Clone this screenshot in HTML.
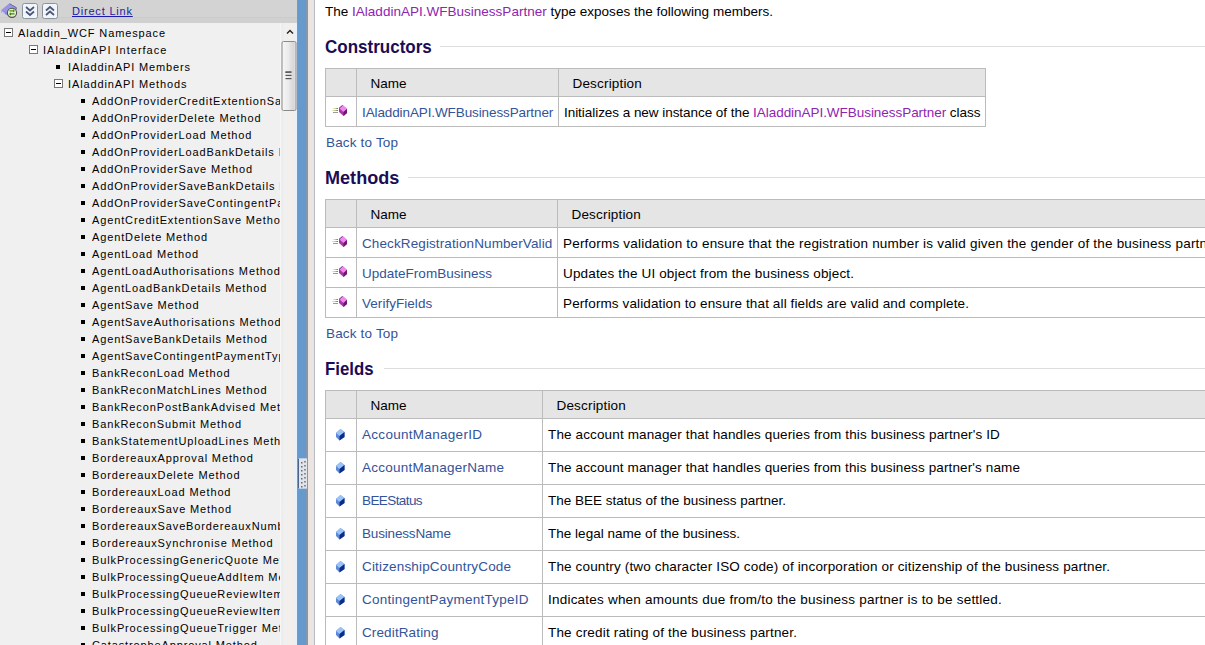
<!DOCTYPE html>
<html><head><meta charset="utf-8">
<style>
*{margin:0;padding:0;box-sizing:border-box}
html,body{width:1205px;height:645px;overflow:hidden;background:#fff}
body{position:relative;font-family:"Liberation Sans",sans-serif}
#left{position:absolute;left:0;top:0;width:297px;height:645px;background:#f0f0f0;overflow:hidden}
#tb{position:absolute;left:0;top:0;width:297px;height:23px;background:#d3d3d3}
#tbl{position:absolute;left:0;top:17px;width:297px;height:6px;background:#d0d0d0;border-top:1px solid #cbcbcb}
#dl{position:absolute;left:72px;top:5px;font-size:11px;letter-spacing:0.8px;color:#1c1ca8;text-decoration:underline;white-space:nowrap}
#tree{position:absolute;left:0;top:23px;width:280px;height:622px;overflow:hidden;font-size:11px;letter-spacing:0.75px;color:#000}
.r{position:absolute;height:17px;white-space:nowrap;line-height:17px}
.pm{position:absolute;width:9px;height:9px;border:1px solid #787878;background:#fff}
.pm:after{content:"";position:absolute;left:1px;top:3px;width:5px;height:1px;background:#000}
.bl{position:absolute;width:4px;height:4px;background:#000}
#sb{position:absolute;left:280px;top:23px;width:17px;height:622px;background:linear-gradient(90deg,#fafafa,#ececec 10%,#f1f1f1 30%,#f3efec 60%,#f2eee9 80%,#e6f1fc 88%,#e6f1fc)}
#split{position:absolute;left:297px;top:0;width:11px;height:645px;background:#6699cc;border-left:1px solid #6f9bcc;border-right:2px solid #8796ab}
#grip{position:absolute;left:0;top:458px;width:9px;height:31px;background:#dfe3ea;border-left:1px solid #50648a;border-top:1px solid #b8cce6;border-bottom:1px solid #b8cce6}
#gap{position:absolute;left:308px;top:0;width:6px;height:645px;background:#ebe4e0}
#gline{position:absolute;left:314px;top:0;width:1px;height:645px;background:#b5bcc2}
#content{position:absolute;left:315px;top:0;width:890px;height:645px;background:#fff;overflow:hidden;font-size:13px;color:#000}
.t{position:absolute;white-space:nowrap;line-height:15px;font-size:13.5px;letter-spacing:0.23px}
.h2{position:absolute;font-size:19px;line-height:21px;font-weight:bold;color:#1c0c56;white-space:nowrap}
.hr{position:absolute;height:1px;background:#dddddd}
.thd{position:absolute;background:#e5e5e5}
.bd{position:absolute;background:#bbbbbb}
.blue{color:#33539a}
.purp{color:#8e24b0}
</style></head><body>
<div id="left">
  <div id="tb">
    <div id="tbl"></div>
    <svg width="60" height="23" viewBox="0 0 60 23" style="position:absolute;left:0;top:0">
      <polygon points="1.5,10 9.5,3.5 16.5,7.5 16.5,9.5 9,16 1.5,12.5" fill="#8a88d6"/>
      <polygon points="1.5,10 9.5,3.5 16.5,7.5 9,13.5" fill="#9896e0"/>
      <polyline points="9.5,3.8 16.2,7.6 16.2,9.5" fill="none" stroke="#6a6ca6" stroke-width="1"/>
      <polygon points="2,11 5,13 4.5,14.5 2,12.8" fill="#c8c8f6"/>
      <circle cx="12" cy="12.8" r="4.6" fill="#e4f2c4" stroke="#505050" stroke-width="1.1"/>
      <polygon points="9.5,10.2 13,10.2 13,9 15,10.9 13,12.6 13,11.5 9.5,11.5" fill="#4a9418"/>
      <polygon points="14.5,13.2 11,13.2 11,12.2 9,14 11,15.8 11,14.5 14.5,14.5" fill="#3c8412"/>
      <rect x="22.5" y="3.5" width="15" height="15" rx="2" fill="#f1f6fb" stroke="#8a929a" stroke-width="1"/>
      <polyline points="26,7 30,10.5 34,7" fill="none" stroke="#4d5478" stroke-width="1.7"/>
      <polyline points="26,11.5 30,15 34,11.5" fill="none" stroke="#4d5478" stroke-width="1.7"/>
      <rect x="42.5" y="3.5" width="15" height="15" rx="2" fill="#f1f6fb" stroke="#8a929a" stroke-width="1"/>
      <polyline points="46,10.5 50,7 54,10.5" fill="none" stroke="#4d5478" stroke-width="1.7"/>
      <polyline points="46,15 50,11.5 54,15" fill="none" stroke="#4d5478" stroke-width="1.7"/>
    </svg>
    <div id="dl">Direct Link</div>
  </div>
  <div id="tree"><div class="pm" style="left:4px;top:5px"></div>
<div class="r" style="left:18px;top:2px;letter-spacing:0.87px">Aladdin_WCF Namespace</div>
<div class="pm" style="left:29px;top:22px"></div>
<div class="r" style="left:43px;top:19px;letter-spacing:1.0px">IAladdinAPI Interface</div>
<div class="bl" style="left:56px;top:42px"></div>
<div class="r" style="left:68px;top:36px;letter-spacing:0.87px">IAladdinAPI Members</div>
<div class="pm" style="left:54px;top:56px"></div>
<div class="r" style="left:68px;top:53px;letter-spacing:0.87px">IAladdinAPI Methods</div>
<div class="bl" style="left:81px;top:76px"></div>
<div class="r" style="left:92px;top:70px;letter-spacing:0.87px">AddOnProviderCreditExtentionSave Method</div>
<div class="bl" style="left:81px;top:93px"></div>
<div class="r" style="left:92px;top:87px;letter-spacing:0.87px">AddOnProviderDelete Method</div>
<div class="bl" style="left:81px;top:110px"></div>
<div class="r" style="left:92px;top:104px;letter-spacing:0.87px">AddOnProviderLoad Method</div>
<div class="bl" style="left:81px;top:127px"></div>
<div class="r" style="left:92px;top:121px;letter-spacing:0.87px">AddOnProviderLoadBankDetails Method</div>
<div class="bl" style="left:81px;top:144px"></div>
<div class="r" style="left:92px;top:138px;letter-spacing:0.87px">AddOnProviderSave Method</div>
<div class="bl" style="left:81px;top:161px"></div>
<div class="r" style="left:92px;top:155px;letter-spacing:0.87px">AddOnProviderSaveBankDetails Method</div>
<div class="bl" style="left:81px;top:178px"></div>
<div class="r" style="left:92px;top:172px;letter-spacing:0.87px">AddOnProviderSaveContingentPaymentType Method</div>
<div class="bl" style="left:81px;top:195px"></div>
<div class="r" style="left:92px;top:189px;letter-spacing:0.87px">AgentCreditExtentionSave Method</div>
<div class="bl" style="left:81px;top:212px"></div>
<div class="r" style="left:92px;top:206px;letter-spacing:0.87px">AgentDelete Method</div>
<div class="bl" style="left:81px;top:229px"></div>
<div class="r" style="left:92px;top:223px;letter-spacing:0.87px">AgentLoad Method</div>
<div class="bl" style="left:81px;top:246px"></div>
<div class="r" style="left:92px;top:240px;letter-spacing:0.87px">AgentLoadAuthorisations Method</div>
<div class="bl" style="left:81px;top:263px"></div>
<div class="r" style="left:92px;top:257px;letter-spacing:0.87px">AgentLoadBankDetails Method</div>
<div class="bl" style="left:81px;top:280px"></div>
<div class="r" style="left:92px;top:274px;letter-spacing:0.87px">AgentSave Method</div>
<div class="bl" style="left:81px;top:297px"></div>
<div class="r" style="left:92px;top:291px;letter-spacing:0.87px">AgentSaveAuthorisations Method</div>
<div class="bl" style="left:81px;top:314px"></div>
<div class="r" style="left:92px;top:308px;letter-spacing:0.87px">AgentSaveBankDetails Method</div>
<div class="bl" style="left:81px;top:331px"></div>
<div class="r" style="left:92px;top:325px;letter-spacing:0.87px">AgentSaveContingentPaymentType Method</div>
<div class="bl" style="left:81px;top:348px"></div>
<div class="r" style="left:92px;top:342px;letter-spacing:0.87px">BankReconLoad Method</div>
<div class="bl" style="left:81px;top:365px"></div>
<div class="r" style="left:92px;top:359px;letter-spacing:0.87px">BankReconMatchLines Method</div>
<div class="bl" style="left:81px;top:382px"></div>
<div class="r" style="left:92px;top:376px;letter-spacing:0.87px">BankReconPostBankAdvised Method</div>
<div class="bl" style="left:81px;top:399px"></div>
<div class="r" style="left:92px;top:393px;letter-spacing:0.87px">BankReconSubmit Method</div>
<div class="bl" style="left:81px;top:416px"></div>
<div class="r" style="left:92px;top:410px;letter-spacing:0.87px">BankStatementUploadLines Method</div>
<div class="bl" style="left:81px;top:433px"></div>
<div class="r" style="left:92px;top:427px;letter-spacing:0.87px">BordereauxApproval Method</div>
<div class="bl" style="left:81px;top:450px"></div>
<div class="r" style="left:92px;top:444px;letter-spacing:0.87px">BordereauxDelete Method</div>
<div class="bl" style="left:81px;top:467px"></div>
<div class="r" style="left:92px;top:461px;letter-spacing:0.87px">BordereauxLoad Method</div>
<div class="bl" style="left:81px;top:484px"></div>
<div class="r" style="left:92px;top:478px;letter-spacing:0.87px">BordereauxSave Method</div>
<div class="bl" style="left:81px;top:501px"></div>
<div class="r" style="left:92px;top:495px;letter-spacing:0.87px">BordereauxSaveBordereauxNumber Method</div>
<div class="bl" style="left:81px;top:518px"></div>
<div class="r" style="left:92px;top:512px;letter-spacing:0.87px">BordereauxSynchronise Method</div>
<div class="bl" style="left:81px;top:535px"></div>
<div class="r" style="left:92px;top:529px;letter-spacing:0.87px">BulkProcessingGenericQuote Method</div>
<div class="bl" style="left:81px;top:552px"></div>
<div class="r" style="left:92px;top:546px;letter-spacing:0.87px">BulkProcessingQueueAddItem Method</div>
<div class="bl" style="left:81px;top:569px"></div>
<div class="r" style="left:92px;top:563px;letter-spacing:0.87px">BulkProcessingQueueReviewItem Method</div>
<div class="bl" style="left:81px;top:586px"></div>
<div class="r" style="left:92px;top:580px;letter-spacing:0.87px">BulkProcessingQueueReviewItems Method</div>
<div class="bl" style="left:81px;top:603px"></div>
<div class="r" style="left:92px;top:597px;letter-spacing:0.87px">BulkProcessingQueueTrigger Method</div>
<div class="bl" style="left:81px;top:620px"></div>
<div class="r" style="left:92px;top:614px;letter-spacing:0.87px">CatastropheApproval Method</div></div>
  <div id="sb">
    <svg width="17" height="622" viewBox="0 0 16 622" style="position:absolute;left:1px;top:0">
      <polyline points="5.5,10.5 8.5,7.5 11.5,10.5" fill="none" stroke="#222" stroke-width="1.4"/>
      <rect x="0.5" y="18.5" width="14" height="69" rx="1.5" fill="url(#tg)" stroke="#8a8a8a" stroke-width="1"/>
      <defs><linearGradient id="tg" x1="0" x2="1" y1="0" y2="0"><stop offset="0" stop-color="#f6f6f6"/><stop offset="0.45" stop-color="#ebebeb"/><stop offset="0.8" stop-color="#d9d6d8"/><stop offset="1" stop-color="#e4e4e8"/></linearGradient></defs>
      <polygon points="4,48.5 10,48.5 10,49.5 4,50" fill="#555"/>
      <rect x="4" y="48.5" width="6" height="1.2" fill="#555"/>
      <rect x="4" y="51.8" width="6" height="1.2" fill="#555"/>
      <rect x="4" y="55" width="6" height="1.2" fill="#555"/>
    </svg>
  </div>
</div>
<div id="split"><div id="grip"><svg width="9" height="31" style="position:absolute;left:0;top:0"><rect x="2" y="3" width="1.5" height="1.5" fill="#6a6a78"/><rect x="5.2" y="2" width="1.5" height="1.5" fill="#6a6a78"/><rect x="2" y="7" width="1.5" height="1.5" fill="#6a6a78"/><rect x="5.2" y="6" width="1.5" height="1.5" fill="#6a6a78"/><rect x="2" y="11" width="1.5" height="1.5" fill="#6a6a78"/><rect x="5.2" y="10" width="1.5" height="1.5" fill="#6a6a78"/><rect x="2" y="15" width="1.5" height="1.5" fill="#6a6a78"/><rect x="5.2" y="14" width="1.5" height="1.5" fill="#6a6a78"/><rect x="2" y="19" width="1.5" height="1.5" fill="#6a6a78"/><rect x="5.2" y="18" width="1.5" height="1.5" fill="#6a6a78"/><rect x="2" y="23" width="1.5" height="1.5" fill="#6a6a78"/><rect x="5.2" y="22" width="1.5" height="1.5" fill="#6a6a78"/><rect x="2" y="27" width="1.5" height="1.5" fill="#6a6a78"/><rect x="5.2" y="26" width="1.5" height="1.5" fill="#6a6a78"/></svg></div></div>
<div id="gap"></div>
<div id="gline"></div>
<div id="content"><div class="t" style="left:10px;top:4px;letter-spacing:0.011px">The <span class="purp">IAladdinAPI.WFBusinessPartner</span> type exposes the following members.</div>
<div class="h2" style="left:10px;top:36px;transform:scaleX(0.8952);transform-origin:0 0">Constructors</div>
<div class="hr" style="left:125px;top:46px;width:765px"></div>
<div class="h2" style="left:10px;top:167px;transform:scaleX(0.9513);transform-origin:0 0">Methods</div>
<div class="hr" style="left:93px;top:177px;width:797px"></div>
<div class="h2" style="left:10px;top:358px;transform:scaleX(0.8827);transform-origin:0 0">Fields</div>
<div class="hr" style="left:69px;top:368px;width:821px"></div>
<div class="thd" style="left:10px;top:68px;width:660px;height:28px"></div>
<div class="bd" style="left:10px;top:68px;width:661px;height:1px"></div>
<div class="bd" style="left:10px;top:96px;width:661px;height:1px"></div>
<div class="bd" style="left:10px;top:126px;width:661px;height:1px"></div>
<div class="bd" style="left:10px;top:68px;width:1px;height:59px"></div>
<div class="bd" style="left:41px;top:68px;width:1px;height:59px"></div>
<div class="bd" style="left:243px;top:68px;width:1px;height:59px"></div>
<div class="bd" style="left:670px;top:68px;width:1px;height:59px"></div>
<div class="t" style="left:55.5px;top:76px;letter-spacing:0.028px">Name</div>
<div class="t" style="left:257.5px;top:76px;letter-spacing:0.177px">Description</div>
<div class="t blue" style="left:47px;top:105px;letter-spacing:-0.109px">IAladdinAPI.WFBusinessPartner</div>
<div class="t" style="left:249px;top:105px;letter-spacing:-0.045px">Initializes a new instance of the <span class="purp">IAladdinAPI.WFBusinessPartner</span> class</div>
<svg width="16" height="12" viewBox="0 0 16 12" style="position:absolute;left:17px;top:105px">
<defs><linearGradient id="lg17105" x1="0" x2="1"><stop offset="0" stop-color="#f0f0c8"/><stop offset="0.5" stop-color="#c8c898"/><stop offset="1" stop-color="#707070"/></linearGradient></defs>
<rect x="1" y="3" width="5" height="1" fill="url(#lg17105)"/><rect x="0" y="5" width="6" height="1" fill="url(#lg17105)"/><rect x="1" y="7" width="5" height="1" fill="#9a9a9a"/>
<polygon points="10.5,0 15,4 15,8 11.5,11 7,7 7,3" fill="#a838a8"/>
<polygon points="10.5,0 15,4 11.5,7 7,3" fill="#f088f0"/>
<polygon points="15,4 15,8 11.5,11 11.5,7" fill="#6a1870"/>
<polyline points="7,3.5 10.5,0.5" stroke="#603070" stroke-width="0.8" fill="none"/>
</svg>
<div class="t blue" style="left:11px;top:135px;letter-spacing:0.170px">Back to Top</div>
<div class="thd" style="left:10px;top:199px;width:975px;height:28px"></div>
<div class="bd" style="left:10px;top:199px;width:976px;height:1px"></div>
<div class="bd" style="left:10px;top:227px;width:976px;height:1px"></div>
<div class="bd" style="left:10px;top:257px;width:976px;height:1px"></div>
<div class="bd" style="left:10px;top:287px;width:976px;height:1px"></div>
<div class="bd" style="left:10px;top:317px;width:976px;height:1px"></div>
<div class="bd" style="left:10px;top:199px;width:1px;height:119px"></div>
<div class="bd" style="left:41px;top:199px;width:1px;height:119px"></div>
<div class="bd" style="left:242px;top:199px;width:1px;height:119px"></div>
<div class="t" style="left:55.5px;top:207px;letter-spacing:0.028px">Name</div>
<div class="t" style="left:256.5px;top:207px;letter-spacing:0.177px">Description</div>
<div class="t blue" style="left:47px;top:236px;letter-spacing:0.109px">CheckRegistrationNumberValid</div>
<div class="t" style="left:248px;top:236px;letter-spacing:0.202px">Performs validation to ensure that the registration number is valid given the gender of the business partner.</div>
<svg width="16" height="12" viewBox="0 0 16 12" style="position:absolute;left:17px;top:236px">
<defs><linearGradient id="lg17236" x1="0" x2="1"><stop offset="0" stop-color="#f0f0c8"/><stop offset="0.5" stop-color="#c8c898"/><stop offset="1" stop-color="#707070"/></linearGradient></defs>
<rect x="1" y="3" width="5" height="1" fill="url(#lg17236)"/><rect x="0" y="5" width="6" height="1" fill="url(#lg17236)"/><rect x="1" y="7" width="5" height="1" fill="#9a9a9a"/>
<polygon points="10.5,0 15,4 15,8 11.5,11 7,7 7,3" fill="#a838a8"/>
<polygon points="10.5,0 15,4 11.5,7 7,3" fill="#f088f0"/>
<polygon points="15,4 15,8 11.5,11 11.5,7" fill="#6a1870"/>
<polyline points="7,3.5 10.5,0.5" stroke="#603070" stroke-width="0.8" fill="none"/>
</svg>
<div class="t blue" style="left:47px;top:266px;letter-spacing:0.011px">UpdateFromBusiness</div>
<div class="t" style="left:248px;top:266px;letter-spacing:0.160px">Updates the UI object from the business object.</div>
<svg width="16" height="12" viewBox="0 0 16 12" style="position:absolute;left:17px;top:266px">
<defs><linearGradient id="lg17266" x1="0" x2="1"><stop offset="0" stop-color="#f0f0c8"/><stop offset="0.5" stop-color="#c8c898"/><stop offset="1" stop-color="#707070"/></linearGradient></defs>
<rect x="1" y="3" width="5" height="1" fill="url(#lg17266)"/><rect x="0" y="5" width="6" height="1" fill="url(#lg17266)"/><rect x="1" y="7" width="5" height="1" fill="#9a9a9a"/>
<polygon points="10.5,0 15,4 15,8 11.5,11 7,7 7,3" fill="#a838a8"/>
<polygon points="10.5,0 15,4 11.5,7 7,3" fill="#f088f0"/>
<polygon points="15,4 15,8 11.5,11 11.5,7" fill="#6a1870"/>
<polyline points="7,3.5 10.5,0.5" stroke="#603070" stroke-width="0.8" fill="none"/>
</svg>
<div class="t blue" style="left:47px;top:296px;letter-spacing:0.038px">VerifyFields</div>
<div class="t" style="left:248px;top:296px;letter-spacing:0.122px">Performs validation to ensure that all fields are valid and complete.</div>
<svg width="16" height="12" viewBox="0 0 16 12" style="position:absolute;left:17px;top:296px">
<defs><linearGradient id="lg17296" x1="0" x2="1"><stop offset="0" stop-color="#f0f0c8"/><stop offset="0.5" stop-color="#c8c898"/><stop offset="1" stop-color="#707070"/></linearGradient></defs>
<rect x="1" y="3" width="5" height="1" fill="url(#lg17296)"/><rect x="0" y="5" width="6" height="1" fill="url(#lg17296)"/><rect x="1" y="7" width="5" height="1" fill="#9a9a9a"/>
<polygon points="10.5,0 15,4 15,8 11.5,11 7,7 7,3" fill="#a838a8"/>
<polygon points="10.5,0 15,4 11.5,7 7,3" fill="#f088f0"/>
<polygon points="15,4 15,8 11.5,11 11.5,7" fill="#6a1870"/>
<polyline points="7,3.5 10.5,0.5" stroke="#603070" stroke-width="0.8" fill="none"/>
</svg>
<div class="t blue" style="left:11px;top:326px;letter-spacing:0.170px">Back to Top</div>
<div class="thd" style="left:10px;top:390px;width:975px;height:28px"></div>
<div class="bd" style="left:10px;top:390px;width:976px;height:1px"></div>
<div class="bd" style="left:10px;top:418px;width:976px;height:1px"></div>
<div class="bd" style="left:10px;top:451px;width:976px;height:1px"></div>
<div class="bd" style="left:10px;top:484px;width:976px;height:1px"></div>
<div class="bd" style="left:10px;top:517px;width:976px;height:1px"></div>
<div class="bd" style="left:10px;top:550px;width:976px;height:1px"></div>
<div class="bd" style="left:10px;top:583px;width:976px;height:1px"></div>
<div class="bd" style="left:10px;top:616px;width:976px;height:1px"></div>
<div class="bd" style="left:10px;top:649px;width:976px;height:1px"></div>
<div class="bd" style="left:10px;top:390px;width:1px;height:260px"></div>
<div class="bd" style="left:41px;top:390px;width:1px;height:260px"></div>
<div class="bd" style="left:227px;top:390px;width:1px;height:260px"></div>
<div class="t" style="left:55.5px;top:398px;letter-spacing:0.028px">Name</div>
<div class="t" style="left:241.5px;top:398px;letter-spacing:0.177px">Description</div>
<div class="t blue" style="left:47px;top:427px;letter-spacing:0.296px">AccountManagerID</div>
<div class="t" style="left:233px;top:427px;letter-spacing:0.134px">The account manager that handles queries from this business partner's ID</div>
<svg width="9" height="12" viewBox="0 0 9 12" style="position:absolute;left:21px;top:429px">
<polygon points="4.5,0 8.5,3 8.5,8 3.5,11.5 0,8 0,4" fill="#5a8ad8"/>
<polygon points="4.5,0 8.5,3 3.5,7 0,4" fill="#9ac4f8"/>
<polygon points="8.5,3 8.5,8 3.5,11.5 3.5,7" fill="#0c2c88"/>
</svg>
<div class="t blue" style="left:47px;top:460px;letter-spacing:0.231px">AccountManagerName</div>
<div class="t" style="left:233px;top:460px;letter-spacing:0.129px">The account manager that handles queries from this business partner's name</div>
<svg width="9" height="12" viewBox="0 0 9 12" style="position:absolute;left:21px;top:462px">
<polygon points="4.5,0 8.5,3 8.5,8 3.5,11.5 0,8 0,4" fill="#5a8ad8"/>
<polygon points="4.5,0 8.5,3 3.5,7 0,4" fill="#9ac4f8"/>
<polygon points="8.5,3 8.5,8 3.5,11.5 3.5,7" fill="#0c2c88"/>
</svg>
<div class="t blue" style="left:47px;top:493px;letter-spacing:-0.587px">BEEStatus</div>
<div class="t" style="left:233px;top:493px;letter-spacing:0.003px">The BEE status of the business partner.</div>
<svg width="9" height="12" viewBox="0 0 9 12" style="position:absolute;left:21px;top:495px">
<polygon points="4.5,0 8.5,3 8.5,8 3.5,11.5 0,8 0,4" fill="#5a8ad8"/>
<polygon points="4.5,0 8.5,3 3.5,7 0,4" fill="#9ac4f8"/>
<polygon points="8.5,3 8.5,8 3.5,11.5 3.5,7" fill="#0c2c88"/>
</svg>
<div class="t blue" style="left:47px;top:526px;letter-spacing:-0.172px">BusinessName</div>
<div class="t" style="left:233px;top:526px;letter-spacing:0.021px">The legal name of the business.</div>
<svg width="9" height="12" viewBox="0 0 9 12" style="position:absolute;left:21px;top:528px">
<polygon points="4.5,0 8.5,3 8.5,8 3.5,11.5 0,8 0,4" fill="#5a8ad8"/>
<polygon points="4.5,0 8.5,3 3.5,7 0,4" fill="#9ac4f8"/>
<polygon points="8.5,3 8.5,8 3.5,11.5 3.5,7" fill="#0c2c88"/>
</svg>
<div class="t blue" style="left:47px;top:559px;letter-spacing:0.163px">CitizenshipCountryCode</div>
<div class="t" style="left:233px;top:559px;letter-spacing:0.146px">The country (two character ISO code) of incorporation or citizenship of the business partner.</div>
<svg width="9" height="12" viewBox="0 0 9 12" style="position:absolute;left:21px;top:561px">
<polygon points="4.5,0 8.5,3 8.5,8 3.5,11.5 0,8 0,4" fill="#5a8ad8"/>
<polygon points="4.5,0 8.5,3 3.5,7 0,4" fill="#9ac4f8"/>
<polygon points="8.5,3 8.5,8 3.5,11.5 3.5,7" fill="#0c2c88"/>
</svg>
<div class="t blue" style="left:47px;top:592px;letter-spacing:0.230px">ContingentPaymentTypeID</div>
<div class="t" style="left:233px;top:592px;letter-spacing:0.215px">Indicates when amounts due from/to the business partner is to be settled.</div>
<svg width="9" height="12" viewBox="0 0 9 12" style="position:absolute;left:21px;top:594px">
<polygon points="4.5,0 8.5,3 8.5,8 3.5,11.5 0,8 0,4" fill="#5a8ad8"/>
<polygon points="4.5,0 8.5,3 3.5,7 0,4" fill="#9ac4f8"/>
<polygon points="8.5,3 8.5,8 3.5,11.5 3.5,7" fill="#0c2c88"/>
</svg>
<div class="t blue" style="left:47px;top:625px;letter-spacing:0.123px">CreditRating</div>
<div class="t" style="left:233px;top:625px;letter-spacing:0.179px">The credit rating of the business partner.</div>
<svg width="9" height="12" viewBox="0 0 9 12" style="position:absolute;left:21px;top:627px">
<polygon points="4.5,0 8.5,3 8.5,8 3.5,11.5 0,8 0,4" fill="#5a8ad8"/>
<polygon points="4.5,0 8.5,3 3.5,7 0,4" fill="#9ac4f8"/>
<polygon points="8.5,3 8.5,8 3.5,11.5 3.5,7" fill="#0c2c88"/>
</svg></div>
</body></html>
